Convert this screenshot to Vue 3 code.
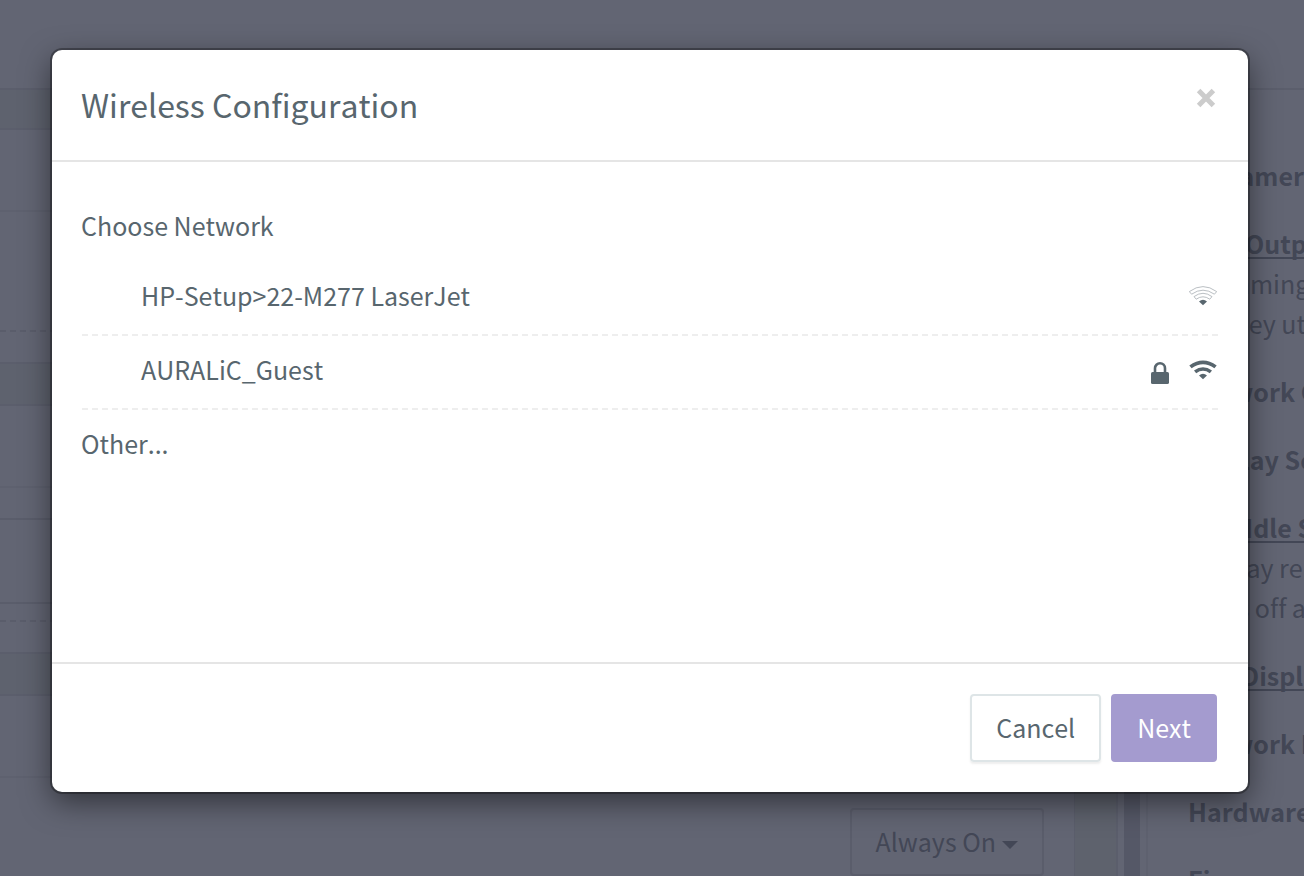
<script setup>
const networks = [
  { name: 'HP-Setup>22-M277 LaserJet', secure: false, strong: false },
  { name: 'AURALiC_Guest', secure: true, strong: true }
]

const outerArc = 'M0.3 5.6Q14 -4.4 27.7 5.6L25.4 8.2Q14 0.2 2.6 8.2Z'
const innerArc = 'M5 10.6Q14 4 23 10.6L20.8 13.2Q14 8.4 7.2 13.2Z'
const base = 'M10 15.4Q14 12 18 15.4L14 19.2Z'

const topics = [
  { title: 'Streamer' },
  { title: 'USB Output', link: true, lines: ['Streaming', 'do they utilize'] },
  { title: 'Network Configuration' },
  { title: 'Display Settings' },
  { title: 'USB Idle State', link: true, lines: ['Display remains', 'turns off after'] },
  { title: 'LED Display', link: true },
  { title: 'Network Information' },
  { title: 'Hardware' },
  { title: 'Firmware' }
]
</script>

<template>
  <div class="screen">
    <div class="topbar"></div>
    <div class="page">
      <main class="settings">
        <div class="band"></div>
        <div class="row r82"></div>
        <div class="row dashed r120"></div>
        <div class="space"></div>
        <div class="band tall"></div>
        <div class="row r82"></div>
        <div class="row strong r32"></div>
        <div class="row strong r84"></div>
        <div class="row dashed r18"></div>
        <div class="space"></div>
        <div class="band tall"></div>
        <div class="row r82"></div>
        <div class="power">
          <button class="select" type="button">Always On <i class="caret"></i></button>
        </div>
      </main>
      <div class="gutter"></div>
      <div class="scroll"></div>
      <aside class="help">
        <section v-for="t in topics" :key="t.title" class="topic">
          <a v-if="t.link" class="title" href="#">{{ t.title }}</a>
          <strong v-else class="title">{{ t.title }}</strong>
          <p v-for="l in t.lines" :key="l">{{ l }}</p>
        </section>
      </aside>
    </div>

    <div class="overlay">
      <div class="modal" role="dialog" aria-labelledby="dialog-title">
        <header class="head">
          <h1 id="dialog-title">Wireless Configuration</h1>
          <button class="close" type="button" aria-label="Close">
            <svg width="20" height="20" viewBox="0 0 20 20"><path d="M2.6 2.6L17.4 17.4M17.4 2.6L2.6 17.4" /></svg>
          </button>
        </header>
        <div class="body">
          <h2>Choose Network</h2>
          <ul>
            <li v-for="n in networks" :key="n.name">
              <button class="network" type="button">
                <span class="name">{{ n.name }}</span>
                <svg v-if="n.secure" class="lock" width="18" height="30" viewBox="0 -8 18 30">
                  <path class="shackle" d="M4 11V6.3a5 5 0 0 1 10 0V11" />
                  <rect y="10" width="18" height="12" rx="1.6" />
                </svg>
                <svg class="wifi" :class="{ weak: !n.strong }" width="28" height="22" viewBox="0 -2 28 22">
                  <path class="arc" :d="outerArc" />
                  <path class="arc" :d="innerArc" />
                  <path :d="base" />
                </svg>
              </button>
            </li>
          </ul>
          <button class="other" type="button">Other...</button>
        </div>
        <footer class="foot">
          <button class="btn cancel" type="button">Cancel</button>
          <button class="btn next" type="button">Next</button>
        </footer>
      </div>
    </div>
  </div>
</template>

<style>
body {
  margin: 0;
  background: #626573;
}
</style>

<style scoped>
.screen {
  position: relative;
  display: flex;
  flex-direction: column;
  height: 100vh;
  overflow: hidden;
  background: #626573;
  color: #58666e;
  font-family: "Noto Sans CJK SC", "Noto Sans", sans-serif;
  font-size: 25px;
  line-height: 40px;
  font-kerning: none;
  font-variant-ligatures: none;
}
.screen * {
  box-sizing: border-box;
}
button {
  margin: 0;
  padding: 0;
  border: 0;
  background: none;
  color: inherit;
  font: inherit;
  font-kerning: inherit;
  font-variant-ligatures: inherit;
}
h1, h2, p, ul {
  margin: 0;
  padding: 0;
  font-weight: 400;
}
ul {
  list-style: none;
}
.topbar {
  flex: none;
  height: 88px;
}
.page {
  flex: 1;
  display: grid;
  grid-template-columns: 1fr 44px 30px 156px;
  min-height: 0;
  color: #434756;
}
.band {
  height: 42px;
  border: solid #5b5e6c;
  border-width: 2px 0;
  background: #5e626e;
}
.band.tall {
  height: 44px;
}
.row {
  border-bottom: 2px solid #5e616f;
}
.row.dashed {
  border-bottom: 2px dashed #5a5d6b;
}
.row.strong {
  border-bottom-color: #5a5d6b;
}
.r18 { height: 18px; }
.r32 { height: 32px; }
.r82 { height: 82px; }
.r84 { height: 84px; }
.r120 { height: 120px; }
.space {
  height: 30px;
}
.power {
  display: flex;
  justify-content: flex-end;
  padding: 30px 30px 0;
}
.select {
  display: flex;
  align-items: center;
  gap: 6px;
  height: 68px;
  padding: 0 24px 2px 23px;
  border: 2px solid #5a5d6b;
  border-radius: 4px;
}
.caret {
  margin-top: 8px;
  border: solid transparent;
  border-width: 8px 8px 0;
  border-top-color: #434756;
}
.gutter {
  border: solid #5b5e6c;
  border-width: 0 2px 0 1px;
  background: #5e626d;
}
.scroll {
  border-right: 2px solid #5e616f;
  background: linear-gradient(#555867, #555867) 6px 0 / 16px 100% no-repeat;
}
.help {
  overflow: hidden;
  padding: 65px 0 0 40px;
  border-top: 2px solid #5b5e6c;
  white-space: nowrap;
}
.topic {
  margin-bottom: 28px;
}
.title {
  display: block;
  color: inherit;
  font-weight: 700;
  text-decoration: none;
}
a.title {
  text-decoration: underline;
  text-decoration-thickness: 2px;
  text-decoration-skip-ink: none;
  text-underline-offset: 3px;
}
.overlay {
  position: absolute;
  inset: 0;
  padding: 50px 56px 0 52px;
}
.modal {
  border-radius: 10px;
  background: #fff;
  box-shadow: 0 0 0 2px rgba(0, 0, 0, 0.3), 0 10px 30px rgba(0, 0, 0, 0.5);
}
.head {
  display: flex;
  justify-content: space-between;
  align-items: flex-start;
  padding: 30px 32px 30px 29px;
  border-bottom: 2px solid #e5e5e5;
}
h1 {
  margin-bottom: 2px;
  font-size: 32px;
  line-height: 48px;
}
.close {
  display: flex;
  margin-top: 8px;
}
.close path {
  fill: none;
  stroke: #ccc;
  stroke-width: 5;
}
.body {
  min-height: 500px;
  padding: 30px 30px 30px 29px;
}
h2 {
  margin-bottom: 4px;
  font-size: 25px;
  line-height: 66px;
}
ul {
  padding-left: 1px;
}
.network {
  display: flex;
  align-items: center;
  gap: 20px;
  width: 100%;
  height: 74px;
  padding: 0 1px 6px 59px;
  border-bottom: 2px dashed #eee;
  text-align: left;
}
.name {
  flex: 1;
}
.wifi,
.lock {
  fill: #58666e;
}
.shackle {
  fill: none;
  stroke: #58666e;
  stroke-width: 2.6;
}
.weak .arc {
  fill: none;
  stroke: #9ca4a9;
  stroke-width: 0.7;
}
.other {
  display: block;
  line-height: 66px;
}
.foot {
  display: flex;
  justify-content: flex-end;
  gap: 10px;
  padding: 30px 31px 30px 30px;
  border-top: 2px solid #e5e5e5;
}
.btn {
  height: 68px;
  padding: 0 24px 2px;
  border: 2px solid #dee5e7;
  border-radius: 4px;
}
.cancel {
  box-shadow: 0 2px 2px rgba(90, 90, 90, 0.1);
}
.next {
  border-color: #a49bcf;
  background: #a49bcf;
  color: #fff;
}
</style>
